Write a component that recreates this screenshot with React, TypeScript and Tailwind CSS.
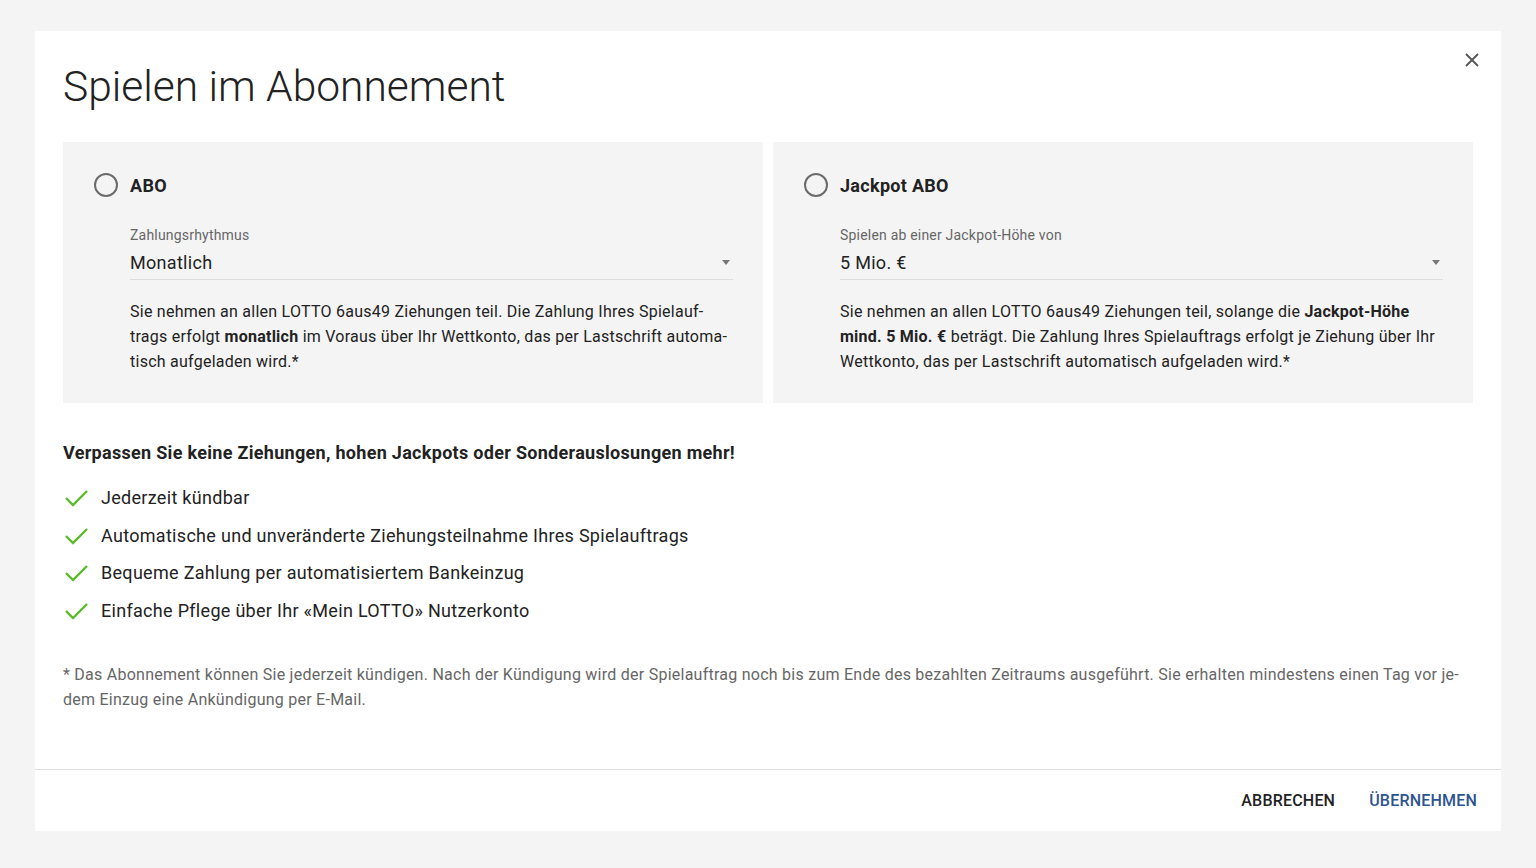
import React from 'react';

function Radio() {
  return <span className="w-6 h-6 rounded-full border-2 border-[#6b6b6b] shrink-0" />;
}

function Check() {
  return (
    <svg width="26" height="20" viewBox="0 0 26 20" className="shrink-0">
      <polyline points="3,10 10,17 24,3" fill="none" stroke="#5dbb2b" strokeWidth="2.4" />
    </svg>
  );
}

function Select({ label, value }: { label: string; value: string }) {
  return (
    <div className="ml-[36px]">
      <div className="text-[14px] leading-[20px] text-[#666] tracking-[0.2px]">{label}</div>
      <div className="flex items-center justify-between border-b border-[#dcdcdc] pt-[5px] pb-[3px] text-[18px] leading-[26px] text-[#222] tracking-[0.3px]">
        <span>{value}</span>
        <svg width="10" height="6" viewBox="0 0 10 6" className="mr-[2px]">
          <polygon points="1,0 9,0 5,5" fill="#777" />
        </svg>
      </div>
    </div>
  );
}

const perks = [
  'Jederzeit kündbar',
  'Automatische und unveränderte Ziehungsteilnahme Ihres Spielauftrags',
  'Bequeme Zahlung per automatisiertem Bankeinzug',
  'Einfache Pflege über Ihr «Mein LOTTO» Nutzerkonto',
];

export default function App() {
  return (
    <div className="min-h-[868px] bg-[#f4f4f4] pt-[31px] px-[35px] font-['Roboto',sans-serif] text-[#222]">
      <div className="bg-white h-[800px] flex flex-col">
        <div className="relative px-[28px] pt-[28px] flex-1">
          <button className="absolute right-[20px] top-[20px] text-[#555]">
            <svg width="18" height="18" viewBox="0 0 18 18">
              <path d="M3 3L15 15M15 3L3 15" stroke="#555" strokeWidth="1.8" />
            </svg>
          </button>
          <h1 className="text-[42.5px] leading-[56px] font-light text-[#222]">Spielen im Abonnement</h1>

          <div className="grid grid-cols-2 gap-[10px] mt-[27px]">
            <div className="bg-[#f4f4f4] h-[261px] pl-[31px] pr-[30px] pt-[31px]">
              <div className="flex items-center gap-[12px] h-[24px]">
                <Radio />
                <span className="text-[18px] font-bold tracking-[0.3px]">ABO</span>
              </div>
              <div className="mt-[28px]">
                <Select label="Zahlungsrhythmus" value="Monatlich" />
                <p className="ml-[36px] mt-[19px] text-[16px] leading-[25px] text-[#222] tracking-[0.25px]">
                  Sie nehmen an allen LOTTO 6aus49 Ziehungen teil. Die Zahlung Ihres Spielauf-
                  <br />
                  trags erfolgt <b>monatlich</b> im Voraus über Ihr Wettkonto, das per Lastschrift automa-
                  <br />
                  tisch aufgeladen wird.*
                </p>
              </div>
            </div>
            <div className="bg-[#f4f4f4] h-[261px] pl-[31px] pr-[30px] pt-[31px]">
              <div className="flex items-center gap-[12px] h-[24px]">
                <Radio />
                <span className="text-[18px] font-bold tracking-[0.3px]">Jackpot ABO</span>
              </div>
              <div className="mt-[28px]">
                <Select label="Spielen ab einer Jackpot-Höhe von" value="5 Mio. €" />
                <p className="ml-[36px] mt-[19px] text-[16px] leading-[25px] text-[#222] tracking-[0.25px]">
                  Sie nehmen an allen LOTTO 6aus49 Ziehungen teil, solange die <b>Jackpot-Höhe</b>
                  <br />
                  <b>mind. 5 Mio. €</b> beträgt. Die Zahlung Ihres Spielauftrags erfolgt je Ziehung über Ihr
                  <br />
                  Wettkonto, das per Lastschrift automatisch aufgeladen wird.*
                </p>
              </div>
            </div>
          </div>

          <h2 className="mt-[37px] text-[18px] leading-[26px] font-bold text-[#222] tracking-[0.3px]">
            Verpassen Sie keine Ziehungen, hohen Jackpots oder Sonderauslosungen mehr!
          </h2>
          <ul className="mt-[19px] flex flex-col gap-[11.5px]">
            {perks.map((p) => (
              <li key={p} className="flex items-center gap-[12px] text-[18px] leading-[26px] text-[#222] tracking-[0.3px]">
                <Check />
                <span>{p}</span>
              </li>
            ))}
          </ul>

          <p className="mt-[38px] text-[16px] leading-[25px] text-[#666] tracking-[0.25px]">
            * Das Abonnement können Sie jederzeit kündigen. Nach der Kündigung wird der Spielauftrag noch bis zum Ende des bezahlten Zeitraums ausgeführt. Sie erhalten mindestens einen Tag vor je-
            <br />
            dem Einzug eine Ankündigung per E-Mail.
          </p>
        </div>

        <div className="border-t border-[#e0e0e0] h-[62px] flex items-center justify-end gap-[34px] pr-[24px]">
          <button className="text-[16px] font-medium text-[#222] tracking-[0.2px]">ABBRECHEN</button>
          <button className="text-[16px] font-medium text-[#2c5490] tracking-[0.2px]">ÜBERNEHMEN</button>
        </div>
      </div>
    </div>
  );
}
